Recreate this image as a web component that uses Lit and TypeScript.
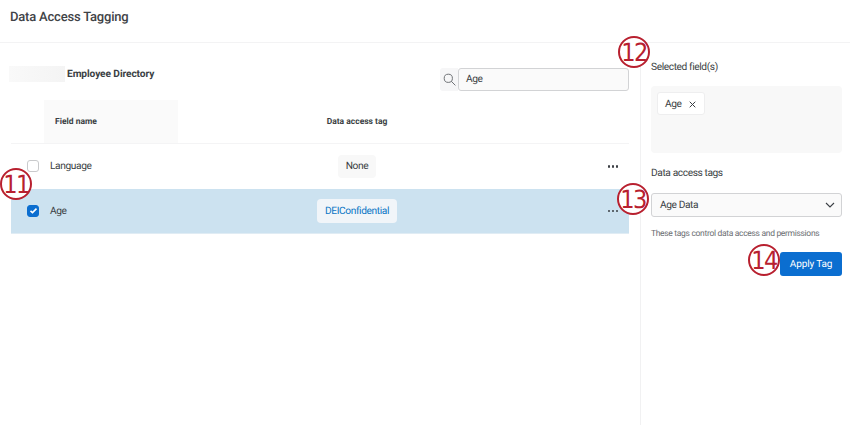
import { LitElement, html, css } from "lit";
import { customElement } from "lit/decorators.js";

const rows = [
  { name: "Language", tag: "None", checked: false },
  { name: "Age", tag: "DEIConfidential", checked: true },
];
const badges = [
  { n: "11", x: 16, y: 184 },
  { n: "12", x: 634, y: 52 },
  { n: "13", x: 633, y: 199 },
  { n: "14", x: 764, y: 260 },
];

@customElement("app-root")
export class AppRoot extends LitElement {
  static styles = css`
    :host { display: block; width: 850px; height: 425px; position: relative; overflow: hidden; background: #fff; text-rendering: geometricPrecision;
      font-family: "Roboto", "Noto Sans", sans-serif; color: #3b3f44; font-size: 10.2px; letter-spacing: -0.4px; }
    .header { height: 43px; box-sizing: border-box; padding: 9px 10px 0; border-bottom: 1px solid #f3f3f4; font-size: 13px; font-weight: 500; line-height: 18px; color: #3f4347; letter-spacing: -0.2px; }
    .main { display: flex; height: 382px; }
    .left { padding: 0 11px 0 9px; width: 641px; box-sizing: border-box; border-right: 1px solid #f1f1f2; }
    .toolbar { display: flex; align-items: center; height: 57px; padding-top: 5px; box-sizing: border-box; }
    .skeleton { width: 56px; height: 16px; background: linear-gradient(90deg, #f9f9f9, #f4f4f4); }
    .directory { margin-left: 2px; font-weight: 700; font-size: 10.2px; flex: 1; letter-spacing: -0.1px; padding-top: 1px; }
    .search { display: flex; height: 23px; width: 189px; margin-top: 11px; }
    .search-icon { width: 18px; background: #f6f6f7; display: flex; align-items: center; justify-content: center; border-radius: 3px 0 0 3px; }
    .input { flex: 1; background: #fafafa; border: 1px solid #d2d3d5; border-bottom-width: 1.5px; border-radius: 3px; padding-left: 7px; display: flex; align-items: center; }
    .table { margin-left: 2px; }
    .grid { display: grid; grid-template-columns: 33px 134px 358px 93px; align-items: center; }
    .thead { height: 44px; border-bottom: 1px solid #f4f4f5; box-sizing: border-box; align-items: stretch; font-weight: 700; font-size: 8.5px; letter-spacing: 0; }
    .th-name { background: #fafafa; display: flex; align-items: center; padding-left: 11px; }
    .th-tag { display: flex; align-items: center; justify-content: center; }
    .row { height: 44.5px; box-sizing: border-box; }
    .row.sel { background: #cce2f0; height: 45.5px; border-bottom: 1px solid #e0ecf4; }
    .check { width: 12px; height: 12px; box-sizing: border-box; border-radius: 3px; border: 1px solid #c9cacc; margin-left: 16px; background: #fff; display: flex; align-items: center; justify-content: center; }
    .check.on { background: #0b6ed0; border-color: #0b6ed0; }
    .cell-name { margin-left: 6px; }
    .sel .cell-name { padding-top: 1px; }
    .cell-tag { display: flex; justify-content: center; }
    .tag { background: #f8f8f8; border-radius: 4px; height: 23px; width: 38px; justify-content: center; display: flex; align-items: center; box-sizing: border-box; }
    .sel .tag { background: #f1f5f9; color: #0b76c5; height: 24px; width: 80px; padding-top: 1px; }
    .dots { display: flex; justify-content: flex-end; padding-right: 11px; gap: 1.5px; }
    .dots i { width: 2.5px; height: 2.5px; border-radius: 50%; background: #3b3f44; display: block; }
    .right { flex: 1; padding: 15px 8px 0 10px; box-sizing: border-box; display: flex; flex-direction: column; }
    .label { line-height: 16px; padding-top: 2px; }
    .box { height: 67px; background: #f8f8f8; border-radius: 4px; margin-top: 10px; padding: 6px; box-sizing: border-box; display: flex; align-items: flex-start; }
    .chip { display: flex; align-items: center; gap: 7px; height: 23px; box-sizing: border-box; padding: 1px 8px 0 7px; background: #fff; border: 1px solid #eeeeef; border-radius: 3px; }
    .label2 { margin-top: 11px; }
    .select { margin-top: 11px; height: 24px; box-sizing: border-box; background: #fafafa; border: 1px solid #d2d3d5; border-bottom-width: 1.5px; border-radius: 3px; display: flex; align-items: center; justify-content: space-between; padding: 0 6px 0 8px; }
    .hint { margin-top: 10px; font-size: 8.5px; line-height: 14px; color: #6b6e72; white-space: nowrap; letter-spacing: -0.32px; }
    .actions { display: flex; justify-content: flex-end; margin-top: 11px; }
    .btn { width: 62px; height: 24px; background: #0b6ed0; color: #fff; border-radius: 3px; display: flex; align-items: center; justify-content: center; font-size: 10px; font-weight: 400; letter-spacing: -0.15px; }
    .badge { position: absolute; width: 32px; height: 32px; box-sizing: border-box; margin: -16px 0 0 -16px; border-radius: 50%; border: 2.5px solid #b8202f; background: #fff; color: #b8202f;
      display: flex; align-items: center; justify-content: center; font-size: 25px; font-family: "DejaVu Sans", sans-serif; font-stretch: condensed; letter-spacing: -1.5px; line-height: 1; }
  `;

  render() {
    return html`
      <div class="header">Data Access Tagging</div>
      <div class="main">
        <section class="left">
          <div class="toolbar">
            <div class="skeleton"></div>
            <div class="directory">Employee Directory</div>
            <div class="search">
              <div class="search-icon">
                <svg width="13" height="13" viewBox="0 0 13 13" fill="none" stroke="#6f7276" stroke-width="1"><circle cx="5.3" cy="5.3" r="4.1"/><path d="M8.2 8.2l4.2 4.2"/></svg>
              </div>
              <div class="input">Age</div>
            </div>
          </div>
          <div class="table">
            <div class="grid thead">
              <div></div>
              <div class="th-name">Field name</div>
              <div class="th-tag">Data access tag</div>
              <div></div>
            </div>
            ${rows.map(
              (r) => html`
                <div class="grid row ${r.checked ? "sel" : ""}">
                  <div class="check ${r.checked ? "on" : ""}">
                    ${r.checked
                      ? html`<svg width="9" height="9" viewBox="0 0 9 9" fill="none" stroke="#fff" stroke-width="1.6"><path d="M1.5 4.8l2 1.8 4-4"/></svg>`
                      : ""}
                  </div>
                  <div class="cell-name">${r.name}</div>
                  <div class="cell-tag"><span class="tag">${r.tag}</span></div>
                  <div class="dots"><i></i><i></i><i></i></div>
                </div>
              `
            )}
          </div>
        </section>
        <aside class="right">
          <div class="label">Selected field(s)</div>
          <div class="box">
            <span class="chip">Age
              <svg width="7" height="7" viewBox="0 0 7 7" fill="none" stroke="#3b3f44" stroke-width="1"><path d="M.7.7l5.6 5.6M6.3.7L.7 6.3"/></svg>
            </span>
          </div>
          <div class="label label2">Data access tags</div>
          <div class="select">Age Data
            <svg width="10" height="6" viewBox="0 0 10 6" fill="none" stroke="#3b3f44" stroke-width="1.1"><path d="M1 1l4 4 4-4"/></svg>
          </div>
          <div class="hint">These tags control data access and permissions</div>
          <div class="actions"><div class="btn">Apply Tag</div></div>
        </aside>
      </div>
      ${badges.map((b) => html`<div class="badge" style="left:${b.x}px;top:${b.y}px">${b.n}</div>`)}
    `;
  }
}
